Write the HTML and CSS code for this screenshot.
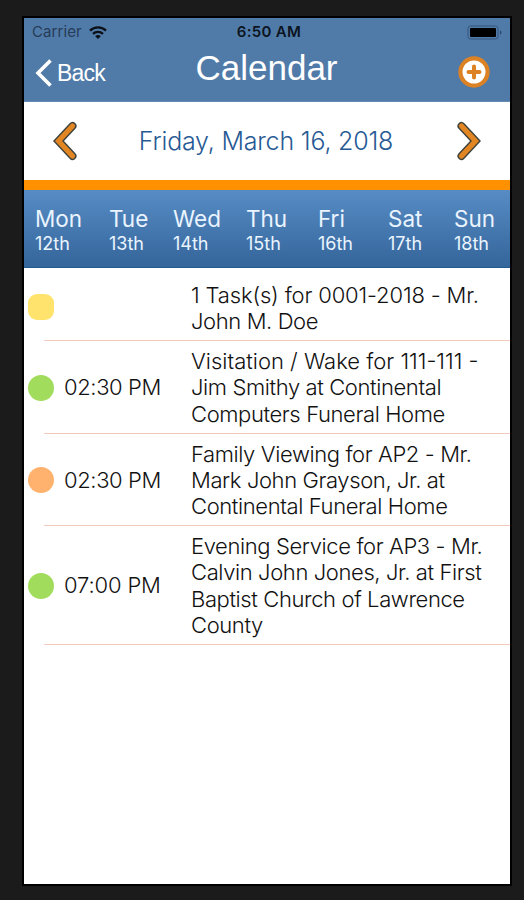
FILE: index.html
```html
<!DOCTYPE html>
<html lang="en">
<head>
<meta charset="utf-8">
<title>Calendar</title>
<link rel="stylesheet" href="styles.css">
</head>
<body>
<main class="screen">
  <header class="header">
    <div class="status">
      <div class="carrier"><span>Carrier</span>
        <svg width="18" height="13" viewBox="0 0 18 13" fill="none" stroke="#0b1018" stroke-width="2.3"><path d="M1 4.6C5.4.2 12.6.2 17 4.6M4 7.9c2.8-2.7 7.2-2.7 10 0"/><path d="M6.2 10.2c1.6-1.5 4-1.5 5.6 0L9 12.9z" fill="#0b1018" stroke="none"/></svg>
      </div>
      <div class="clock">6:50 AM</div>
      <svg class="battery" width="36" height="15" viewBox="0 0 36 15"><rect x="1" y="1" width="30" height="13" rx="2.5" fill="none" stroke="#34557c"/><rect x="3" y="3" width="26" height="9" rx="1" fill="#000"/><path d="M33 5.5c2 .4 2 3.600 0 4z" fill="#2c4a6e"/></svg>
    </div>
    <nav class="nav">
      <a class="back"><svg width="18" height="30" viewBox="0 0 18 30" fill="none" stroke="#fff" stroke-width="3.6"><path d="M15.500 2.500 3 15l12.500 12.500"/></svg><span>Back</span></a>
      <h1 class="title">Calendar</h1>
      <svg class="add" width="32" height="32" viewBox="0 0 32 32"><circle cx="16" cy="16" r="13.600" fill="#fff" stroke="#dc8224" stroke-width="4.200"/><path d="M16 10.500v11M10.500 16h11" stroke="#dc8224" stroke-width="4" stroke-linecap="round"/></svg>
    </nav>
  </header>
  <section class="datebar">
    <svg width="26" height="40" viewBox="0 0 26 40" fill="none" stroke-linecap="round" stroke-linejoin="miter"><path d="M20.500 5 6.500 20l14 15" stroke="#3d423c" stroke-width="8"/><path d="M20.500 5 6.500 20l14 15" stroke="#e28623" stroke-width="5.200"/></svg>
    <div class="date">Friday, March 16, 2018</div>
    <svg width="26" height="40" viewBox="0 0 26 40" fill="none" stroke-linecap="round" stroke-linejoin="miter"><path d="M5.500 5 19.500 20l-14 15" stroke="#3d423c" stroke-width="8"/><path d="M5.500 5 19.500 20l-14 15" stroke="#e28623" stroke-width="5.200"/></svg>
  </section>
  <section class="week">
    <div class="day"><b>Mon</b><span>12th</span></div>
    <div class="day"><b>Tue</b><span>13th</span></div>
    <div class="day"><b>Wed</b><span>14th</span></div>
    <div class="day"><b>Thu</b><span>15th</span></div>
    <div class="day"><b>Fri</b><span>16th</span></div>
    <div class="day"><b>Sat</b><span>17th</span></div>
    <div class="day"><b>Sun</b><span>18th</span></div>
  </section>
  <section class="events">
    <article class="event first"><i class="dot task"></i><time></time><p><span class="wide">1 Task(s) for 0001-2018 - Mr.</span><br>John M. Doe</p></article>
    <article class="event"><i class="dot green"></i><time>02:30 PM</time><p><span class="wider">Visitation / Wake for 111-111 -</span><br>Jim Smithy at Continental<br>Computers Funeral Home</p></article>
    <article class="event third"><i class="dot orange"></i><time>02:30 PM</time><p>Family Viewing for AP2 - Mr.<br>Mark John Grayson, Jr. at<br>Continental Funeral Home</p></article>
    <article class="event last"><i class="dot green"></i><time class="wide">07:00 PM</time><p>Evening Service for AP3 - Mr.<br>Calvin John Jones, Jr. at First<br>Baptist Church of Lawrence<br>County</p></article>
  </section>
</main>
</body>
</html>
```

FILE: styles.css
```css
* { box-sizing: border-box; }
body {
  margin: 0;
  height: 900px;
  padding: 18px 14px 16px 24px;
  background: #1b1b1b;
  font-family: Inter, "Liberation Sans", sans-serif;
  overflow: hidden;
}
.screen {
  height: 866px;
  background: #fff;
  box-shadow: 0 0 0 2px #000;
}
.header {
  height: 84px;
  background: #507ba8;
  border-bottom: 1px solid #648bb3;
}
.status {
  display: grid;
  grid-template-columns: 1fr auto 1fr;
  align-items: center;
  height: 28px;
  padding: 0 7px 0 8px;
  font-size: 15px;
  line-height: 28px;
}
.carrier {
  display: flex;
  align-items: center;
  gap: 7px;
  color: #263c58;
  letter-spacing: 0.1px;
}
.clock {
  padding-left: 3px;
  color: #0b1420;
  font-weight: 600;
  letter-spacing: 0.3px;
}
.battery { justify-self: end; }
.nav {
  display: grid;
  grid-template-columns: 1fr auto 1fr;
  height: 55px;
  padding: 0 20px 0 11px;
  color: #fff;
  font-family: "Liberation Sans", sans-serif;
}
.back {
  display: flex;
  align-items: center;
  gap: 4px;
  height: 30px;
  margin-top: 12px;
  font-size: 23px;
  letter-spacing: -0.8px;
}
.title {
  margin: 3px 0 0;
  padding-left: 8px;
  font-size: 35px;
  font-weight: 400;
  line-height: 38px;
}
.add {
  justify-self: end;
  margin-top: 10px;
}
.datebar {
  display: flex;
  align-items: center;
  justify-content: space-between;
  height: 78px;
  padding: 0 28px;
}
.date {
  padding-right: 2px;
  color: #275a94;
  font-size: 25px;
  font-weight: 300;
  letter-spacing: -0.2px;
  white-space: nowrap;
}
.week {
  display: grid;
  grid-template-columns: 74px 64px 73px 72px 70px 66px 1fr;
  height: 88px;
  padding: 16px 0 0 11px;
  border-top: 10px solid #ff9000;
  border-bottom: 1px solid #235b8d;
  background: linear-gradient(#578cc4, #34659b) padding-box;
  color: #eaf4ff;
}
.day {
  display: flex;
  flex-direction: column;
}
.day b {
  font-size: 22.500px;
  font-weight: 400;
  line-height: 26px;
}
.day span {
  font-size: 18px;
  line-height: 23px;
}
.event {
  display: grid;
  grid-template-columns: 26px 117px 1fr;
  column-gap: 10px;
  align-items: center;
  height: 93px;
  padding: 0 0 0 4px;
  background: linear-gradient(#f3c9be, #f3c9be) 20px 100% / 100% 1px no-repeat;
  color: #111;
}
.event.first {
  height: 73px;
  padding-top: 7px;
}
.event.third { height: 92px; }
.event.last { height: 119px; }
.event time,
.event p {
  margin: 0;
  font-size: 22px;
  font-weight: 350;
  letter-spacing: -0.390px;
  line-height: 26.200px;
  white-space: nowrap;
}
.event .wide { letter-spacing: -0.15px; }
.event .wider { letter-spacing: 0; }
.dot {
  width: 26px;
  height: 26px;
  border-radius: 50%;
}
.task {
  margin-top: -2px;
  border-radius: 9px;
  background: #ffe36d;
}
.green { background: #a1dc5d; }
.orange { background: #ffb26d; }
```
